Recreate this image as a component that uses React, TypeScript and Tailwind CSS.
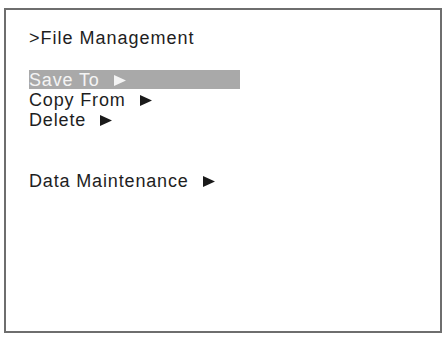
function Arrow({ light = false }: { light?: boolean }) {
  return (
    <svg
      width="12"
      height="11"
      viewBox="0 0 12 11"
      className="ml-[14px] inline-block align-[0px]"
    >
      <path d="M0 0 L12 5.5 L0 11 Z" fill={light ? "#f4f4f4" : "#1a1a1a"} />
    </svg>
  );
}

export default function App() {
  return (
    <div className="w-[446px] h-[337px] bg-white pt-[8px] pl-[4px] font-['Liberation_Sans',Arial,sans-serif]">
      <div className="w-[438px] h-[325px] border-2 border-[#6e6e6e] pt-[18px] pl-[23px] text-[18px] leading-[20px] text-[#1e1e1e]">
        <div className="tracking-[1px]">&gt;File Management</div>

        <div className="mt-[22px] tracking-[0.85px]">
          <div className="w-[211px] h-[19px] bg-[#a9a9a9] text-[#f4f4f4]">
            Save To
            <Arrow light />
          </div>
          <div className="mt-[1px]">
            Copy From
            <Arrow />
          </div>
          <div>
            Delete
            <Arrow />
          </div>
          <div className="mt-[41px]">
            Data Maintenance
            <Arrow />
          </div>
        </div>
      </div>
    </div>
  );
}
